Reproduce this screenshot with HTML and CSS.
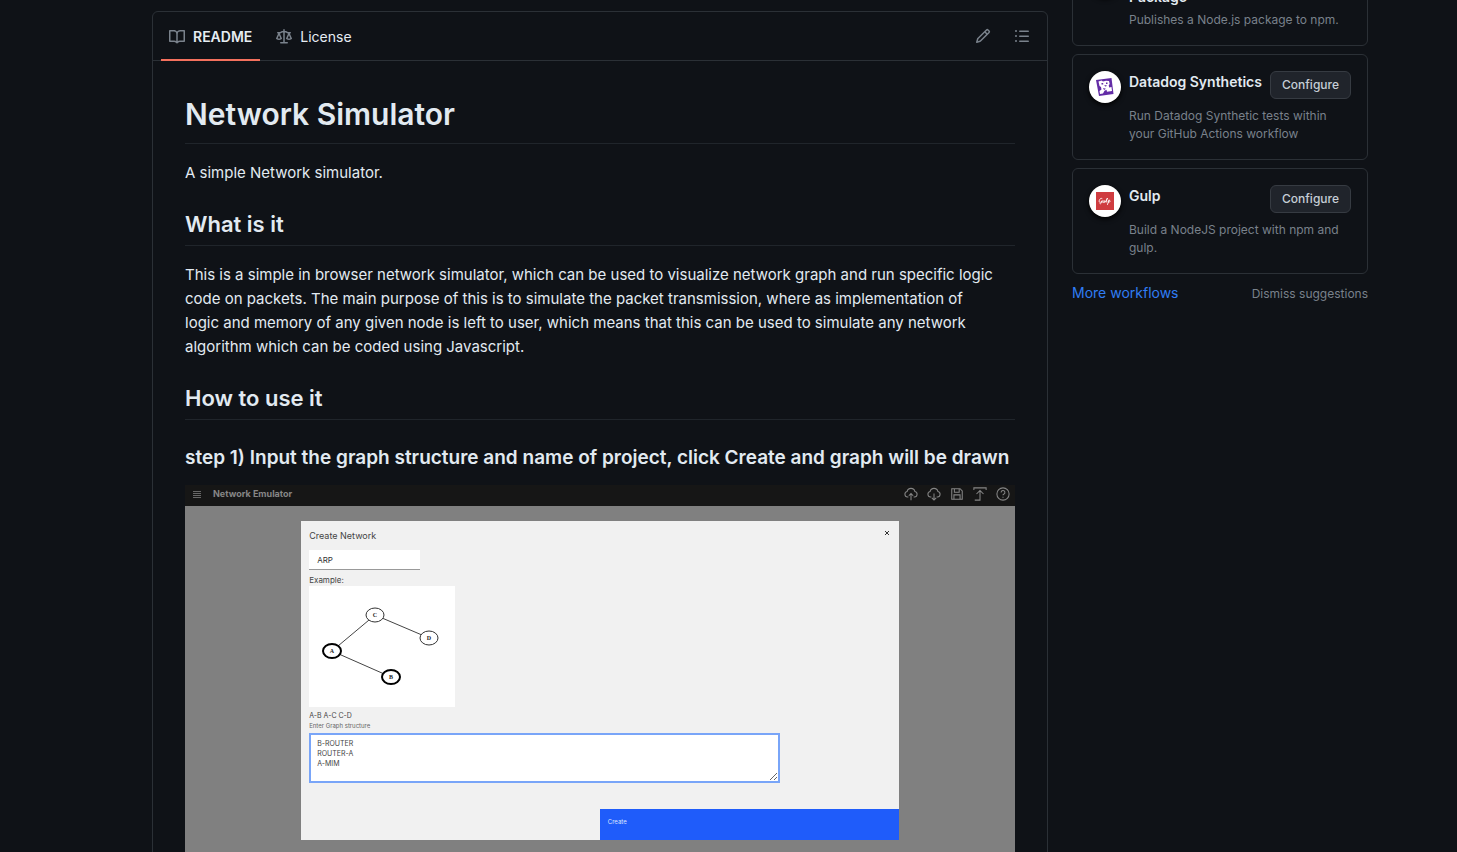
FILE: index.html
```html
<!DOCTYPE html>
<html lang="en">
<head>
<meta charset="utf-8">
<title>Network Simulator</title>
<link rel="stylesheet" href="styles.css">
</head>
<body>
<div class="page">
  <main class="readme">
    <header class="readme-bar">
      <nav class="tabs">
        <a class="tab tab-active" href="#readme">
          <svg class="octicon" viewBox="0 0 16 16"><path d="M0 1.75A.75.75 0 0 1 .75 1h4.253c1.227 0 2.317.59 3 1.501A3.743 3.743 0 0 1 11.006 1h4.245a.75.75 0 0 1 .75.75v10.5a.75.75 0 0 1-.75.75h-4.507a2.25 2.25 0 0 0-1.591.659l-.622.621a.75.75 0 0 1-1.06 0l-.622-.621A2.25 2.25 0 0 0 5.258 13H.75a.75.75 0 0 1-.75-.75Zm7.251 10.324.004-5.073-.002-2.253A2.25 2.25 0 0 0 5.003 2.5H1.5v9h3.757a3.75 3.75 0 0 1 1.994.574ZM8.755 4.75l-.004 7.322a3.752 3.752 0 0 1 1.992-.572H14.5v-9h-3.495a2.25 2.25 0 0 0-2.25 2.25Z"/></svg>
          <span>README</span>
        </a>
        <a class="tab" href="#license">
          <svg class="octicon" viewBox="0 0 16 16"><path d="M8.75.75V2h.985c.304 0 .603.08.867.231l1.29.736c.038.022.08.033.124.033h2.234a.75.75 0 0 1 0 1.5h-.427l2.111 4.692a.75.75 0 0 1-.154.838l-.53-.53.529.531-.001.002-.002.002-.006.006-.006.005-.01.01-.045.04c-.21.176-.441.327-.686.45C14.556 10.78 13.88 11 13 11a4.498 4.498 0 0 1-2.023-.454 3.544 3.544 0 0 1-.686-.45l-.045-.04-.016-.015-.006-.006-.004-.004v-.001a.75.75 0 0 1-.154-.838L12.178 4.5h-.162c-.305 0-.604-.079-.868-.231l-1.29-.736a.245.245 0 0 0-.124-.033H8.75V13h2.5a.75.75 0 0 1 0 1.5h-6.5a.75.75 0 0 1 0-1.5h2.5V3.5h-.984a.245.245 0 0 0-.124.033l-1.289.737c-.265.15-.564.23-.869.23h-.162l2.112 4.692a.75.75 0 0 1-.154.838l-.53-.53.529.531-.001.002-.002.002-.006.006-.016.015-.045.04c-.21.176-.441.327-.686.45C4.556 10.78 3.88 11 3 11a4.498 4.498 0 0 1-2.023-.454 3.544 3.544 0 0 1-.686-.45l-.045-.04-.016-.015-.006-.006-.004-.004v-.001a.75.75 0 0 1-.154-.838L2.178 4.5H1.75a.75.75 0 0 1 0-1.5h2.234a.249.249 0 0 0 .125-.033l1.288-.737c.265-.15.564-.23.869-.23h.984V.75a.75.75 0 0 1 1.5 0Zm2.945 8.477c.285.135.718.273 1.305.273s1.02-.138 1.305-.273L13 6.327Zm-10 0c.285.135.718.273 1.305.273s1.02-.138 1.305-.273L3 6.327Z"/></svg>
          <span>License</span>
        </a>
      </nav>
      <div class="bar-actions">
        <button class="icon-button" type="button" aria-label="Edit file"><svg class="octicon" viewBox="0 0 16 16"><path d="M11.013 1.427a1.75 1.75 0 0 1 2.474 0l1.086 1.086a1.75 1.75 0 0 1 0 2.474l-8.61 8.61c-.21.21-.47.364-.756.445l-3.251.93a.75.75 0 0 1-.927-.928l.929-3.25c.081-.286.235-.547.445-.758l8.61-8.61Zm.176 4.823L9.75 4.81l-6.286 6.287a.253.253 0 0 0-.064.108l-.558 1.953 1.953-.558a.253.253 0 0 0 .108-.064Zm1.238-3.763a.25.25 0 0 0-.354 0L10.811 3.75l1.439 1.44 1.263-1.263a.25.25 0 0 0 0-.354Z"/></svg></button>
        <button class="icon-button" type="button" aria-label="Outline"><svg class="octicon" viewBox="0 0 16 16"><path d="M5.75 2.5h8.5a.75.75 0 0 1 0 1.5h-8.5a.75.75 0 0 1 0-1.5Zm0 5h8.5a.75.75 0 0 1 0 1.5h-8.5a.75.75 0 0 1 0-1.5Zm0 5h8.5a.75.75 0 0 1 0 1.5h-8.5a.75.75 0 0 1 0-1.5ZM2 14a1 1 0 1 1 0-2 1 1 0 0 1 0 2Zm1-6a1 1 0 1 1-2 0 1 1 0 0 1 2 0ZM2 4a1 1 0 1 1 0-2 1 1 0 0 1 0 2Z"/></svg></button>
      </div>
    </header>
    <article class="article">
      <h1>Network Simulator</h1>
      <p>A simple Network simulator.</p>
      <h2>What is it</h2>
      <p>This is a simple in browser network simulator, which can be used to visualize network graph and run specific logic code on packets. The main purpose of this is to simulate the packet transmission, where as implementation of logic and memory of any given node is left to user, which means that this can be used to simulate any network algorithm which can be coded using Javascript.</p>
      <h2>How to use it</h2>
      <h3>step 1) Input the graph structure and name of project, click Create and graph will be drawn</h3>
      <div class="emulator">
        <div class="emu-bar">
          <svg class="emu-menu" viewBox="0 0 8 8"><path d="M0 1.500h8M0 3.500h8M0 5.500h8M0 7.500h8"/></svg>
          <strong class="emu-name">Network Emulator</strong>
          <div class="emu-icons">
            <svg viewBox="0 0 16 16"><path d="M5 11.500H4A3.200 3.200 0 0 1 3.500 5.200a4.600 4.600 0 0 1 9 0A3.200 3.200 0 0 1 12 11.500h-1M8 15V7.500M5.500 10 8 7.500 10.500 10"/></svg>
            <svg viewBox="0 0 16 16"><path d="M5 11.500H4A3.200 3.200 0 0 1 3.500 5.200a4.600 4.600 0 0 1 9 0A3.200 3.200 0 0 1 12 11.500h-1M8 7.500V15M5.500 12.500 8 15l2.500-2.500"/></svg>
            <svg viewBox="0 0 16 16"><path d="M2 2h9.500L14 4.500V14H2zM5 2v4h5.500V2M4.500 14V9h7v5"/></svg>
            <svg viewBox="0 0 16 16"><path d="M1 3.500V1h14v2.500M2 15h6V4M4 8l4-4 4 4"/></svg>
            <svg viewBox="0 0 16 16"><circle cx="8" cy="8" r="7"/><path d="M5.800 6.200a2.200 2.200 0 1 1 3 2Q8 8.500 8 9.500M8 11v1.300"/></svg>
          </div>
        </div>
        <form class="dialog">
          <div class="dialog-head">
            <label for="net-name">Create Network</label>
            <button class="close" type="button" aria-label="Close"><svg viewBox="0 0 6 6"><path d="M1 1l4 4M5 1 1 5"/></svg></button>
          </div>
          <input class="net-name" id="net-name" type="text" value="ARP">
          <div class="example-label">Example:</div>
          <svg class="graph" viewBox="0 0 146 121">
            <path class="edge" d="M66 29 23 65 82 91M66 29l54 23"/>
            <ellipse class="thin" cx="66" cy="29" rx="9" ry="7"/>
            <ellipse class="thin" cx="120" cy="52" rx="9" ry="7"/>
            <ellipse class="thick" cx="23" cy="65" rx="9" ry="7"/>
            <ellipse class="thick" cx="82" cy="91" rx="9" ry="7"/>
            <text x="66" y="31">C</text><text x="120" y="54">D</text><text x="23" y="67">A</text><text x="82" y="93">B</text>
          </svg>
          <div class="edges">A-B A-C C-D</div>
          <label class="structure-label" for="structure">Enter Graph structure</label>
          <textarea class="structure" id="structure">B-ROUTER
ROUTER-A
A-MIM</textarea>
          <button class="create" type="button">Create</button>
        </form>
      </div>
    </article>
  </main>
  <aside class="sidebar">
    <section class="card">
      <div class="logo"></div>
      <div class="card-body">
        <div class="card-head"><h4>Publish Node.js<br>Package</h4></div>
        <p>Publishes a Node.js package to npm.</p>
      </div>
    </section>
    <section class="card">
      <div class="logo"><svg viewBox="0 0 18 18"><path fill="#632ca6" d="M0 2 15.500 0 17.500 16 3 18z"/><path fill="#fff" d="m2.500 3.500 3-1 1.500 1 3-.8 3 .3.700 3-1 1.200.500 2.300 2.300-.5.500 4-5 .8-.5-2-2 1-1.500 2.700-3 .5-.5-3 2-1.500-.5-2.500-1.500-1z"/><path fill="#632ca6" d="M5.500 5h1.700v1.500H5.500zm4.500-.5h1.500V6H10zM8 7.500l2.700-.4-.7 1.600zM7 10l3 .8-2 1.200z"/></svg></div>
      <div class="card-body">
        <div class="card-head"><h4>Datadog Synthetics</h4><button class="configure" type="button">Configure</button></div>
        <p>Run Datadog Synthetic tests within your GitHub Actions workflow</p>
      </div>
    </section>
    <section class="card">
      <div class="logo"><svg viewBox="0 0 18 18"><path fill="#cf3c40" d="M0 0h18v18H0z"/><path fill="none" stroke="#fff" stroke-width=".9" stroke-linecap="round" d="M6 6.500C4.500 5.500 3 8 3.200 9.500s2 1 2.600-.7c-.1 2-1 3.600-1.800 3M7 8.500c-1 3 .5 3 1.500.2-.6 2 .2 2.300 1 1.300l2-4c-2 4-1.500 5-.3 3.600M13 8l-1.500 4.500M12.800 8.700c2-1 2 1.600-.3 1.600"/></svg></div>
      <div class="card-body">
        <div class="card-head"><h4>Gulp</h4><button class="configure" type="button">Configure</button></div>
        <p>Build a NodeJS project with npm and gulp.</p>
      </div>
    </section>
    <div class="sidebar-links">
      <a class="more" href="#workflows">More workflows</a>
      <button class="dismiss" type="button">Dismiss suggestions</button>
    </div>
  </aside>
</div>
</body>
</html>
```
FILE: styles.css
```css
* { box-sizing: border-box; }
body {
  margin: 0;
  background: #0f1217;
  color: #e2eaf1;
  font: 14px/21px Inter, "Liberation Sans", sans-serif;
}
button, input, textarea { font-family: inherit; margin: 0; }
h1, h2, h3, h4, p { margin: 0; }
.page {
  display: flex;
  align-items: flex-start;
  gap: 24px;
  height: 100vh;
  overflow: hidden;
  padding: 0 89px 0 152px;
}
.readme {
  flex: 1;
  min-width: 0;
  margin-top: 11px;
  border: 1px solid #2b3036;
  border-radius: 6px;
}
.readme-bar {
  display: flex;
  justify-content: space-between;
  align-items: center;
  padding: 0 8px;
  border-bottom: 1px solid #2b3036;
}
.tabs { display: flex; gap: 8px; margin-bottom: -1px; }
.tab {
  display: flex;
  align-items: center;
  gap: 8px;
  height: 49px;
  padding: 2px 8px 0;
  border-bottom: 2px solid transparent;
  color: #e6edf3;
  text-decoration: none;
}
.tab-active { border-bottom-color: #f4705d; font-weight: 600; }
.octicon { display: block; width: 16px; height: 16px; fill: #7a828c; }
.bar-actions { display: flex; gap: 5px; }
.icon-button { padding: 8px 9px; border: 0; background: none; }
.article { padding: 32px; }
.article p { font-size: 15px; line-height: 24px; margin-bottom: 23px; padding-right: 18px; }
h1, h2 { border-bottom: 1px solid #20252b; margin-bottom: 17px; font-weight: 600; }
h1 { font-size: 30px; line-height: 42px; padding-bottom: 8px; }
h2 { font-size: 22px; line-height: 32px; padding-bottom: 5px; }
h3 { font-size: 19px; line-height: 27px; font-weight: 600; margin: 24px 0 14px; }

.emulator { background: #808080; color: #444; padding-bottom: 40px; }
.emu-bar { display: flex; align-items: center; height: 21px; padding: 0 5px 4px 8px; background: #161616; }
.emu-menu { width: 8px; height: 8px; fill: none; stroke: #686868; }
.emu-name { margin-left: 12px; color: #868686; font: 700 9px/12px Inter, sans-serif; }
.emu-icons { display: flex; gap: 9px; margin-left: auto; }
.emu-icons svg { width: 14px; height: 14px; fill: none; stroke: #858585; stroke-width: 1.200; }
.dialog {
  display: flex;
  flex-direction: column;
  align-items: flex-start;
  width: 72%;
  margin: 15px auto 0;
  padding-left: 8px;
  background: #f1f1f1;
  font: 8px/12px Inter, sans-serif;
}
.dialog-head { display: flex; justify-content: space-between; width: 100%; height: 29px; padding: 9px 9px 0 0; font-size: 9px; }
.close { width: 6px; height: 6px; padding: 0; border: 0; background: none; }
.close svg { display: block; fill: none; stroke: #333; }
.net-name { width: 111px; height: 20px; padding: 0 8px; border: 0; border-bottom: 1px solid #999; background: #fff; color: #333; font-size: 8px; }
.example-label { padding-top: 4px; font-size: 8px; }
.graph { display: block; width: 146px; height: 121px; background: #fff; }
.graph text { font: 700 6px "Liberation Serif", serif; text-anchor: middle; fill: #222; }
.edge { fill: none; stroke: #444; }
.thin, .thick { fill: #fff; stroke: #333; }
.thick { stroke: #000; stroke-width: 2; }
.edges { padding-top: 3px; font-size: 7px; }
.structure-label { font-size: 6px; line-height: 8px; color: #666; }
.structure { display: block; width: 471px; max-width: 80%; height: 50px; margin-top: 3px; padding: 4px 6px; border: 2px solid #79a5f8; background: #fff; color: #444; font-size: 7px; line-height: 10px; overflow: hidden; }
.create { align-self: flex-end; width: 299px; max-width: 51%; height: 31px; margin-top: 26px; padding: 0 8px 7px; border: 0; background: #1f5cfa; color: #dce6ff; font-size: 6px; text-align: left; }

.sidebar { width: 296px; margin-top: -52px; }
.card { display: flex; align-items: flex-start; gap: 8px; margin-bottom: 8px; padding: 16px; border: 1px solid #2b3036; border-radius: 6px; }
.logo { display: grid; place-items: center; flex: none; width: 32px; height: 32px; border-radius: 50%; background: #fff; box-shadow: 0 2px 5px #000; }
.logo svg { width: 18px; height: 18px; }
.card-body { flex: 1; min-width: 0; }
.card-head { display: flex; align-items: flex-start; justify-content: space-between; gap: 8px; min-height: 32px; margin-bottom: 4px; }
h4 { font-size: 14px; line-height: 21px; font-weight: 600; }
.card p { color: #79818b; font-size: 12px; line-height: 18px; }
.configure { flex: none; height: 28px; padding: 0 11px 2px; border: 1px solid #363b42; border-radius: 6px; background: #20242b; color: #c6ced6; font-size: 12px; font-weight: 500; }
.sidebar-links { display: flex; justify-content: space-between; align-items: center; }
.more { color: #2f7df4; text-decoration: none; }
.dismiss { padding: 2px 0 0; border: 0; background: none; color: #79818b; font-size: 12px; }
```
